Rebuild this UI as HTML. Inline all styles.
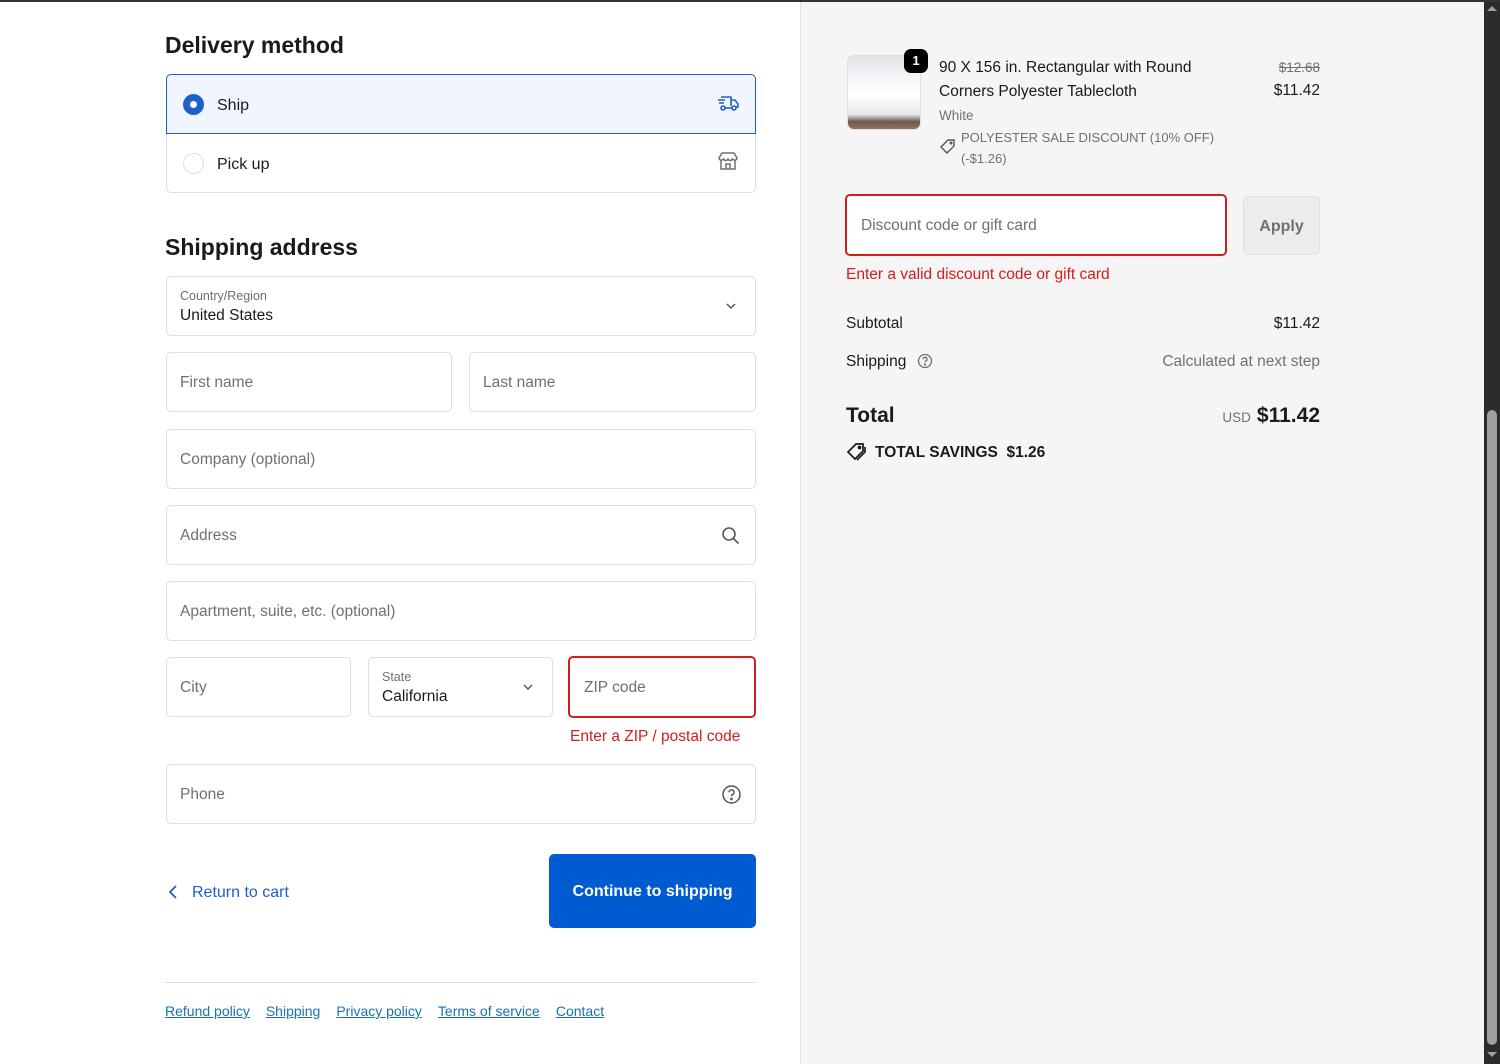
<!DOCTYPE html>
<html><head><meta charset="utf-8"><style>
*{box-sizing:border-box;margin:0;padding:0}
body{width:1500px;height:1064px;overflow:hidden;font-family:"Liberation Sans",sans-serif;color:#1a1a1a;background:#fff;position:relative}
.a{position:absolute}
.box{position:absolute;border:1px solid #dedede;border-radius:5px;background:#fff}
.ph{position:absolute;left:13px;top:50%;transform:translateY(-45%);font-size:15.5px;color:#707070}
.lbl{position:absolute;left:13px;top:12px;font-size:12.5px;color:#707070}
.val{position:absolute;left:13px;top:30px;font-size:15.5px;color:#1a1a1a}
h2{position:absolute;font-size:23px;font-weight:bold;color:#1a1a1a}
.err{color:#d21d1d;font-size:15.5px}
.lnk{color:#1773b0;text-decoration:underline;font-size:14px}
</style></head><body>
<div class="a" style="left:0;top:0;width:1500px;height:2px;background:#333"></div>
<div class="a" style="left:800px;top:2px;width:684px;height:1062px;background:#f5f5f5;border-left:1px solid #e3e3e3"></div>
<div class="a" style="left:1484px;top:2px;width:16px;height:1062px;background:#2b2b2b"></div>
<div class="a" style="left:1487px;top:410px;width:10px;height:635px;background:#9f9f9f;border-radius:5px"></div>
<div class="a" style="left:1487px;top:6px;width:0;height:0;border-left:5px solid transparent;border-right:5px solid transparent;border-bottom:5px solid #9f9f9f"></div>
<div class="a" style="left:1487px;top:1052px;width:0;height:0;border-left:5px solid transparent;border-right:5px solid transparent;border-top:5px solid #9f9f9f"></div>

<h2 style="left:165px;top:32px">Delivery method</h2>
<div class="a" style="left:166px;top:74px;width:590px;height:119px;border:1px solid #dedede;border-radius:5px"></div>
<div class="a" style="left:166px;top:74px;width:590px;height:60px;border:1px solid #1f5fc9;border-radius:5px 5px 0 0;background:#f0f5ff"></div>
<div class="a" style="left:183px;top:94px;width:21px;height:21px;border-radius:50%;background:#1f5fc9"></div>
<div class="a" style="left:190px;top:101px;width:7px;height:7px;border-radius:50%;background:#fff"></div>
<div class="a" style="left:217px;top:97px;font-size:16px">Ship</div>
<svg class="a" style="left:716px;top:92px" width="24" height="22" viewBox="0 0 24 22" fill="none" stroke="#1f5fc9" stroke-width="1.6"><path d="M5 5h10v9M15 8h4l3 4v3h-2M2 8h7M3 11h5"/><circle cx="7" cy="16" r="2"/><circle cx="18" cy="16" r="2"/><path d="M9 16h7"/></svg>
<div class="a" style="left:183px;top:153px;width:21px;height:21px;border-radius:50%;border:1px solid #dedede"></div>
<div class="a" style="left:217px;top:156px;font-size:16px">Pick up</div>
<svg class="a" style="left:717px;top:150px" width="22" height="22" viewBox="0 0 22 22" fill="none" stroke="#707070" stroke-width="1.5"><path d="M5 3h12l3 5c0 2-3 3-4.5 1-1.5 2-3.5 2-4.5 0-1 2-3 2-4.5 0C5 11 2 10 2 8z"/><path d="M4 10v9h14v-9M9 19v-5h4v5"/></svg>

<h2 style="left:165px;top:234px">Shipping address</h2>
<div class="box" style="left:166px;top:276px;width:590px;height:60px"><div class="lbl">Country/Region</div><div class="val">United States</div>
<svg class="a" style="left:558px;top:24px" width="12" height="10" viewBox="0 0 12 10" fill="none" stroke="#555" stroke-width="1.5"><path d="M2 3l4 4 4-4"/></svg></div>
<div class="box" style="left:166px;top:352px;width:286px;height:60px"><div class="ph">First name</div></div>
<div class="box" style="left:469px;top:352px;width:287px;height:60px"><div class="ph">Last name</div></div>
<div class="box" style="left:166px;top:429px;width:590px;height:60px"><div class="ph">Company (optional)</div></div>
<div class="box" style="left:166px;top:505px;width:590px;height:60px"><div class="ph">Address</div>
<svg class="a" style="left:554px;top:20px" width="20" height="20" viewBox="0 0 20 20" fill="none" stroke="#555" stroke-width="1.6"><circle cx="8" cy="8" r="6"/><path d="M12.5 12.5l5 5"/></svg></div>
<div class="box" style="left:166px;top:581px;width:590px;height:60px"><div class="ph">Apartment, suite, etc. (optional)</div></div>
<div class="box" style="left:166px;top:657px;width:185px;height:60px"><div class="ph">City</div></div>
<div class="box" style="left:368px;top:657px;width:185px;height:60px"><div class="lbl">State</div><div class="val">California</div>
<svg class="a" style="left:153px;top:24px" width="12" height="10" viewBox="0 0 12 10" fill="none" stroke="#555" stroke-width="1.5"><path d="M2 3l4 4 4-4"/></svg></div>
<div class="box" style="left:568px;top:656px;width:188px;height:62px;border:2px solid #d21d1d"><div class="ph" style="left:14px">ZIP code</div></div>
<div class="a err" style="left:570px;top:728px">Enter a ZIP / postal code</div>
<div class="box" style="left:166px;top:764px;width:590px;height:60px"><div class="ph">Phone</div>
<svg class="a" style="left:554px;top:19px" width="21" height="21" viewBox="0 0 21 21" fill="none" stroke="#555" stroke-width="1.5"><circle cx="10.5" cy="10.5" r="8.5"/><path d="M8 8.3a2.5 2.5 0 1 1 3.5 2.3c-.8.4-1 .9-1 1.7"/><circle cx="10.5" cy="15" r=".6" fill="#555"/></svg></div>

<svg class="a" style="left:167px;top:884px" width="12" height="16" viewBox="0 0 12 16" fill="none" stroke="#1f5fc9" stroke-width="1.8"><path d="M9 2L3 8l6 6"/></svg>
<div class="a" style="left:192px;top:884px;font-size:16px;color:#1f5fc9">Return to cart</div>
<div class="a" style="left:549px;top:854px;width:207px;height:74px;background:#005bd1;border-radius:5px;color:#fff;font-size:16px;font-weight:bold;text-align:center;line-height:76px">Continue to shipping</div>
<div class="a" style="left:165px;top:982px;width:591px;height:1px;background:#dedede"></div>
<div class="a" style="left:165px;top:1003px"><span class="lnk">Refund policy</span><span class="lnk" style="margin-left:16px">Shipping</span><span class="lnk" style="margin-left:16px">Privacy policy</span><span class="lnk" style="margin-left:16px">Terms of service</span><span class="lnk" style="margin-left:16px">Contact</span></div>

<div class="a" style="left:847px;top:55px;width:74px;height:75px;border-radius:7px;border:1px solid #e0e0e0;background:linear-gradient(#dfe1e6 0,#f4f5f7 30%,#fff 55%,#e8e8ea 80%,#6d5a4c 90%,#8b7666 100%);overflow:hidden"></div>
<div class="a" style="left:904px;top:49px;width:24px;height:24px;border-radius:7px;background:#000;color:#fff;font-size:13px;font-weight:bold;text-align:center;line-height:24px">1</div>
<div class="a" style="left:939px;top:56px;font-size:15.5px;line-height:24px;width:290px">90 X 156 in. Rectangular with Round Corners Polyester Tablecloth</div>
<div class="a" style="left:939px;top:108px;font-size:13.5px;color:#707070">White</div>
<svg class="a" style="left:939px;top:138px" width="17" height="17" viewBox="0 0 17 17" fill="none" stroke="#555" stroke-width="1.4"><path d="M9 2h6v6l-7 7-6-6z"/><circle cx="12" cy="5" r=".8"/></svg>
<div class="a" style="left:961px;top:127px;font-size:13px;color:#707070;line-height:21px">POLYESTER SALE DISCOUNT (10% OFF)<br>(-$1.26)</div>
<div class="a" style="left:1220px;top:60px;width:100px;text-align:right;font-size:13.5px;color:#707070;text-decoration:line-through">$12.68</div>
<div class="a" style="left:1220px;top:82px;width:100px;text-align:right;font-size:15.5px">$11.42</div>

<div class="a" style="left:845px;top:194px;width:382px;height:62px;border:2px solid #d21d1d;border-radius:5px;background:#fff"><div class="ph" style="left:14px">Discount code or gift card</div></div>
<div class="a" style="left:1243px;top:196px;width:77px;height:59px;border:1px solid #e0e0e0;border-radius:5px;background:#ececec;color:#707070;font-size:16px;font-weight:bold;text-align:center;line-height:60px">Apply</div>
<div class="a err" style="left:846px;top:266px">Enter a valid discount code or gift card</div>

<div class="a" style="left:846px;top:315px;font-size:15.5px">Subtotal</div>
<div class="a" style="left:1200px;top:315px;width:120px;text-align:right;font-size:15.5px">$11.42</div>
<div class="a" style="left:846px;top:353px;font-size:15.5px">Shipping</div>
<svg class="a" style="left:917px;top:353px" width="16" height="16" viewBox="0 0 16 16" fill="none" stroke="#707070" stroke-width="1.3"><circle cx="8" cy="8" r="6.5"/><path d="M6.2 6.3a1.9 1.9 0 1 1 2.6 1.7c-.6.3-.8.7-.8 1.3"/><circle cx="8" cy="11.5" r=".5" fill="#707070"/></svg>
<div class="a" style="left:1100px;top:353px;width:220px;text-align:right;font-size:15.5px;color:#707070">Calculated at next step</div>
<div class="a" style="left:846px;top:404px;font-size:21px;font-weight:bold">Total</div>
<div class="a" style="left:1100px;top:404px;width:220px;text-align:right"><span style="font-size:13.5px;color:#707070;margin-right:6px">USD</span><span style="font-size:21px;font-weight:bold">$11.42</span></div>
<svg class="a" style="left:846px;top:442px" width="21" height="20" viewBox="0 0 21 20" fill="none" stroke="#1a1a1a" stroke-width="1.7"><path d="M10 2h7v7l-8 8-7-7z"/><path d="M19 5v5l-8 8"/><circle cx="13.5" cy="5.5" r="1"/></svg>
<div class="a" style="left:875px;top:444px;font-size:15.5px;font-weight:bold">TOTAL SAVINGS&nbsp;&nbsp;$1.26</div>
</body></html>
